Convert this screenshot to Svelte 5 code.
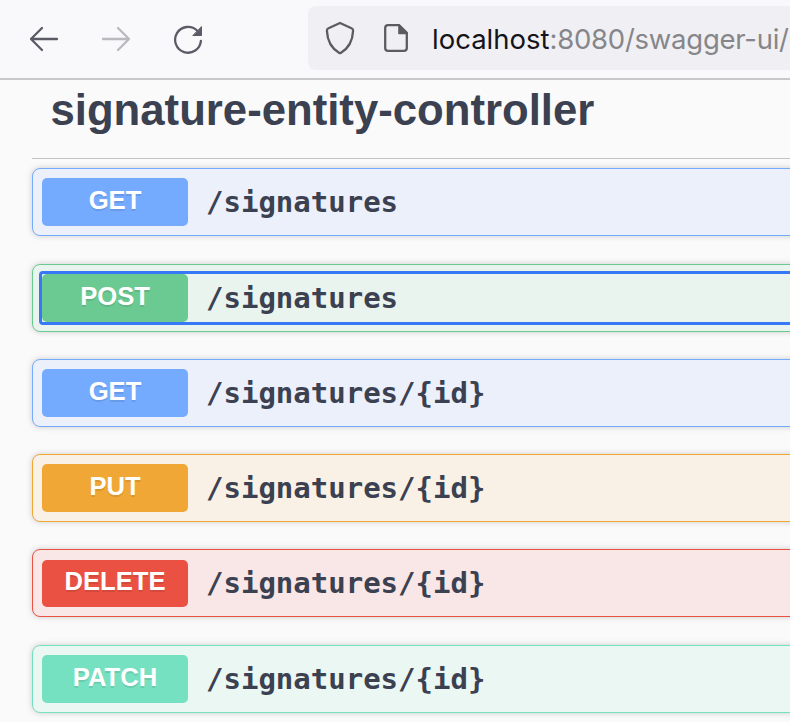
<script>
  const operations = [
    { method: 'GET', path: '/signatures' },
    { method: 'POST', path: '/signatures', focused: true },
    { method: 'GET', path: '/signatures/{id}' },
    { method: 'PUT', path: '/signatures/{id}' },
    { method: 'DELETE', path: '/signatures/{id}' },
    { method: 'PATCH', path: '/signatures/{id}' }
  ];
</script>

<div class="window">
  <header class="toolbar">
    <nav class="nav">
      <svg width="32" height="32" viewBox="0 0 32 32" fill="none" stroke="#5b5b66" stroke-width="2.3" stroke-linecap="round" stroke-linejoin="round">
        <path d="M29 16H3M14 5L3 16L14 27" />
      </svg>
      <svg width="32" height="32" viewBox="0 0 32 32" fill="none" stroke="#b9b9be" stroke-width="2.3" stroke-linecap="round" stroke-linejoin="round">
        <path d="M3 16H29M18 5L29 16L18 27" />
      </svg>
      <svg width="32" height="32" viewBox="0 0 32 32" fill="none" stroke="#5b5b66" stroke-width="2.3" stroke-linecap="round">
        <path d="M25 7.5A12.9 12.9 0 1 0 28.9 17.8" />
        <path d="M29.5 4V12.5H21.2Z" fill="#5b5b66" stroke-width="1" stroke-linejoin="round" />
      </svg>
    </nav>
    <div class="address">
      <svg class="shield" width="32" height="34" viewBox="0 0 32 34" fill="none" stroke="#5b5b62" stroke-width="2.3" stroke-linejoin="round">
        <path d="M16 2L27.5 7.2Q29.3 8 29.1 9.9C28.6 20.2 24.7 27.2 17 31.7Q16 32.4 15 31.7C7.3 27.2 3.4 20.2 2.9 9.9Q2.7 8 4.5 7.2Z" />
      </svg>
      <svg class="page" width="26" height="30" viewBox="0 0 26 30" fill="none" stroke="#5b5b62" stroke-width="2.3" stroke-linejoin="round">
        <path d="M5 2.2H16.2L23.8 9.8V25Q23.8 27.8 21 27.8H5Q2.2 27.8 2.2 25V5Q2.2 2.2 5 2.2Z" />
        <path d="M16 2V10.4H24Z" fill="#5b5b62" stroke-width="1.6" />
      </svg>
      <span class="url">localhost<span class="rest">:8080/swagger-ui/</span></span>
    </div>
  </header>

  <main>
    <h3>signature-entity-controller</h3>
    {#each operations as op}
      <section class="op {op.method.toLowerCase()}">
        <button class="summary" class:focused={op.focused}>
          <span class="method">{op.method}</span>
          <span class="path">{op.path}</span>
        </button>
      </section>
    {/each}
  </main>
</div>

<style>
  :global(body) {
    margin: 0;
    background: #fafafa;
  }
  .window {
    width: 790px;
    height: 722px;
    overflow: hidden;
    background: #fafafa;
  }
  .toolbar {
    box-sizing: border-box;
    height: 80px;
    display: flex;
    align-items: flex-start;
    justify-content: space-between;
    padding: 6px 0 0 28px;
    background: #f9f9fb;
    border-bottom: 2px solid #c8c8ca;
  }
  .nav {
    display: flex;
    gap: 40px;
    padding-top: 17px;
  }
  .nav svg, .address svg {
    display: block;
    flex: none;
  }
  .address {
    box-sizing: border-box;
    width: 482px;
    height: 64px;
    display: flex;
    align-items: center;
    padding-left: 16px;
    background: #f0f0f4;
    border-radius: 8px 0 0 8px;
  }
  .page {
    margin-left: 27px;
  }
  .url {
    margin-left: 23px;
    padding-top: 2px;
    font: 27.5px/40px Inter, sans-serif;
    color: #15141a;
    white-space: nowrap;
  }
  .rest {
    color: #86868a;
    letter-spacing: -0.25px;
  }
  main {
    width: 800px;
    padding-left: 32px;
  }
  h3 {
    box-sizing: border-box;
    height: 79px;
    margin: 0 0 9.3px;
    padding: 5px 0 0 18.5px;
    border-bottom: 1px solid #c2c3c6;
    font: bold 43.7px/50px "Liberation Sans", Arial, sans-serif;
    color: #3b4151;
    white-space: nowrap;
  }
  .op {
    box-sizing: border-box;
    height: 68px;
    margin-bottom: 27.27px;
    padding: 9px;
    border: 1px solid var(--c);
    border-radius: 8px;
    background: var(--bg);
    box-shadow: 0 0 6px rgba(0, 0, 0, 0.19);
  }
  .get { --c: #74abff; --bg: #ebf0fb; }
  .post { --c: #6bca91; --bg: #e9f4ee; }
  .put { --c: #f0a735; --bg: #f9f1e5; }
  .delete { --c: #ea5142; --bg: #f8e7e6; }
  .patch { --c: #76e1c1; --bg: #eaf7f3; }
  .summary {
    display: flex;
    align-items: center;
    width: 100%;
    height: 48px;
    padding: 0;
    border: 0;
    background: none;
    text-align: left;
  }
  .focused {
    outline: 3px solid #3778f6;
    border-radius: 1px;
  }
  .method {
    width: 146px;
    height: 48px;
    flex: none;
    border-radius: 5px;
    background: var(--c);
    color: #fff;
    text-align: center;
    font: bold 25.6px/45px "Liberation Sans", Arial, sans-serif;
    text-shadow: 0 2px 0 rgba(0, 0, 0, 0.1);
  }
  .delete .method {
    height: 47px;
    margin-top: 1px;
    line-height: 43px;
  }
  .path {
    margin-left: 18px;
    font: bold 29px/40px "DejaVu Sans Mono", monospace;
    color: #3b4151;
    white-space: nowrap;
  }
</style>
